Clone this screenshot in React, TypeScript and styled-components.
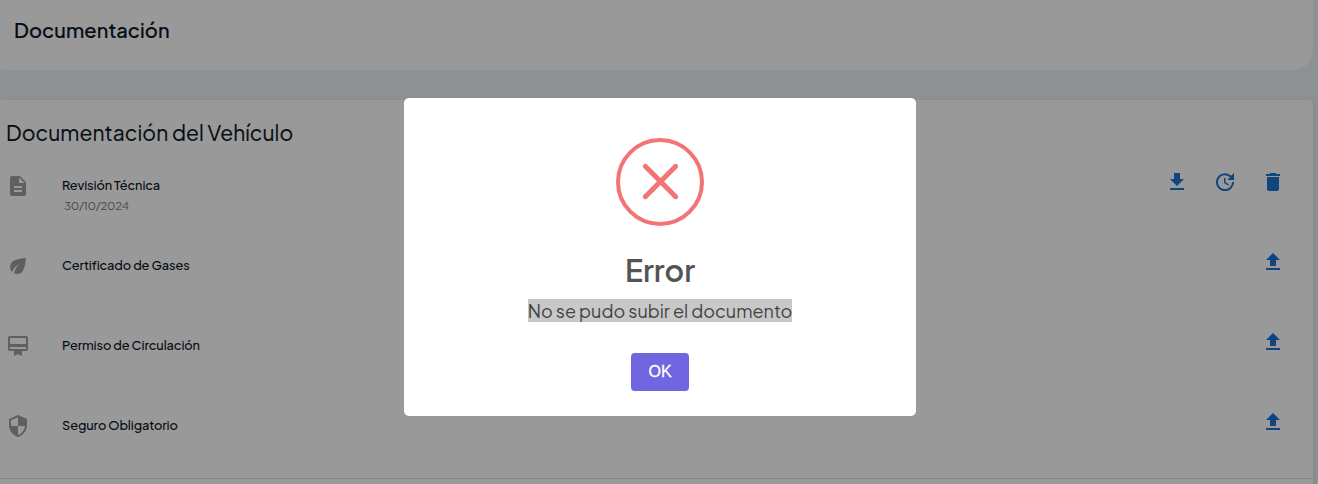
import React from "react";
import styled, { createGlobalStyle } from "styled-components";
import {
  MdCardMembership,
  MdDelete,
  MdDescription,
  MdEco,
  MdFileDownload,
  MdFileUpload,
  MdSecurity,
  MdUpdate,
} from "react-icons/md";

const GlobalStyle = createGlobalStyle`
  * { box-sizing: border-box; }
  body {
    margin: 0;
    overflow: hidden;
    background: #ecf2f7;
    color: #0a1424;
    font-family: "Plus Jakarta Sans", Inter, "Liberation Sans", sans-serif;
  }
`;

const Page = styled.main`
  height: 484px;
  padding-right: 5px;
  overflow: hidden;
  display: flex;
  flex-direction: column;
  gap: 30px;
`;

const Banner = styled.header`
  flex: none;
  height: 70px;
  margin-left: -2px;
  padding: 17px 16px;
  background: #fff;
  border-radius: 0 0 20px 7px;
`;

const BannerTitle = styled.h1`
  margin: 0;
  font-size: 20px;
  font-weight: 500;
  line-height: 26px;
  letter-spacing: 0.1px;
  -webkit-text-stroke: 0.2px currentColor;
`;

const Card = styled.section`
  flex: none;
  height: 420px;
  padding: 20px 28px 0 6px;
  background: #fff;
  border-radius: 0 4px 0 0;
  box-shadow: 0 2px 6px rgba(40, 60, 80, 0.12);
`;

const CardTitle = styled.h2`
  margin: 0;
  font-size: 21px;
  font-weight: 400;
  line-height: 26px;
  letter-spacing: 0.09px;
  -webkit-text-stroke: 0.15px currentColor;
`;

const List = styled.ul`
  list-style: none;
  margin: 0 -28px 0 -6px;
  padding: 0 28px 0 6px;
  height: 333px;
  border-bottom: 1px solid #dcdcdc;
`;

const Row = styled.li`
  display: flex;
  height: 80px;
`;

const RowIcon = styled.span`
  display: flex;
  width: 56px;
  padding-top: 28px;
  color: #9e9e9e;
`;

const RowText = styled.div`
  flex: 1;
  padding-top: 29px;
`;

const RowTitle = styled.div`
  font-size: 12.8px;
  font-weight: 500;
  line-height: 20px;
  letter-spacing: -0.11px;
`;

const RowDate = styled.div`
  padding: 1px 0 0 2px;
  font-size: 11.5px;
  font-weight: 400;
  line-height: 20px;
  letter-spacing: -0.25px;
  color: #777;
`;

const Actions = styled.div`
  display: flex;
  gap: 24px;
  padding-top: 24px;
`;

const ActionButton = styled.button`
  display: flex;
  width: 24px;
  height: 24px;
  padding: 0;
  border: 0;
  background: none;
  color: #1976d2;
`;

const Backdrop = styled.div`
  position: fixed;
  inset: 0;
  display: flex;
  justify-content: center;
  align-items: flex-start;
  padding: 98px 0 0 2px;
  background: rgba(0, 0, 0, 0.4);
`;

const Dialog = styled.div`
  display: flex;
  flex-direction: column;
  align-items: center;
  width: 512px;
  height: 318px;
  padding-top: 40px;
  border-radius: 5px;
  background: #fff;
`;

const DialogTitle = styled.h2`
  margin: 24px 0 0;
  font-size: 30px;
  font-weight: 600;
  line-height: 40px;
  letter-spacing: -0.05px;
  color: #545454;
`;

const DialogMessage = styled.p`
  margin: 9px 0 0;
  font-size: 18px;
  line-height: 23px;
  white-space: nowrap;
  color: #434343;
  background: #c8c8c8;
`;

const ConfirmButton = styled.button`
  width: 58px;
  height: 38px;
  margin-top: 31px;
  padding: 0 0 1px;
  border: 0;
  border-radius: 4px;
  background: #7066e0;
  color: #fff;
  font-family: "Liberation Sans", Arial, sans-serif;
  font-size: 16px;
  font-weight: 500;
  -webkit-text-stroke: 0.3px #fff;
`;

const ErrorMark = () => (
  <svg width="88" height="88" viewBox="0 0 88 88" fill="none" stroke="#f27474">
    <circle cx="44" cy="44" r="42" strokeWidth="4" />
    <path d="M29.3 28.3 59.7 58.7M59.7 28.3 29.3 58.7" strokeWidth="5" strokeLinecap="round" />
  </svg>
);

const documents = [
  { title: "Revisión Técnica", date: "30/10/2024", Icon: MdDescription },
  { title: "Certificado de Gases", Icon: MdEco },
  { title: "Permiso de Circulación", Icon: MdCardMembership },
  { title: "Seguro Obligatorio", Icon: MdSecurity },
];

export default function App() {
  return (
    <>
      <GlobalStyle />
      <Page>
        <Banner>
          <BannerTitle>Documentación</BannerTitle>
        </Banner>
        <Card>
          <CardTitle>Documentación del Vehículo</CardTitle>
          <List>
            {documents.map(({ title, date, Icon }) => (
              <Row key={title}>
                <RowIcon>
                  <Icon size={24} />
                </RowIcon>
                <RowText>
                  <RowTitle>{title}</RowTitle>
                  {date && <RowDate>{date}</RowDate>}
                </RowText>
                <Actions>
                  {date ? (
                    <>
                      <ActionButton aria-label="Descargar"><MdFileDownload size={24} /></ActionButton>
                      <ActionButton aria-label="Actualizar"><MdUpdate size={24} /></ActionButton>
                      <ActionButton aria-label="Eliminar"><MdDelete size={24} /></ActionButton>
                    </>
                  ) : (
                    <ActionButton aria-label="Subir"><MdFileUpload size={24} /></ActionButton>
                  )}
                </Actions>
              </Row>
            ))}
          </List>
        </Card>
      </Page>
      <Backdrop>
        <Dialog role="dialog" aria-modal="true">
          <ErrorMark />
          <DialogTitle>Error</DialogTitle>
          <DialogMessage>No se pudo subir el documento</DialogMessage>
          <ConfirmButton>OK</ConfirmButton>
        </Dialog>
      </Backdrop>
    </>
  );
}
